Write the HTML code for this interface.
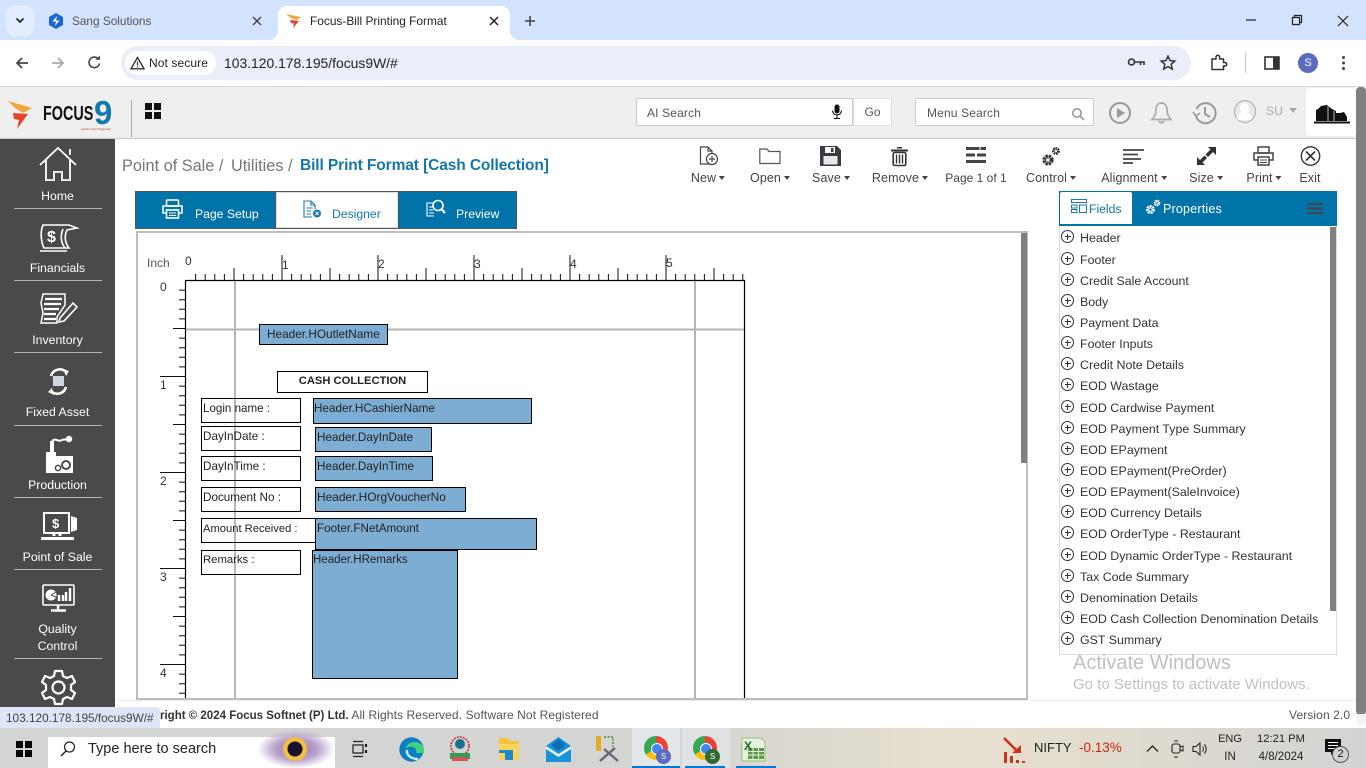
<!DOCTYPE html>
<html><head><meta charset="utf-8"><title>Focus-Bill Printing Format</title>
<style>
html,body{margin:0;padding:0;width:1366px;height:768px;overflow:hidden;background:#fff;font-family:"Liberation Sans",sans-serif;color:#444}
.a{position:absolute}
.t{position:absolute;white-space:nowrap;line-height:16px}
.c{transform:translateX(-50%)}
svg{position:absolute;overflow:visible}
.side{color:#fff;font-size:12.3px;text-align:center;left:0;width:115px}
.ln{position:absolute;left:14px;width:88px;height:1px;background:#b5b5b5}
.tb{color:#444;font-size:12.5px;letter-spacing:.1px}
.car{display:inline-block;width:0;height:0;border-left:3.5px solid transparent;border-right:3.5px solid transparent;border-top:4px solid #444;vertical-align:2px;margin-left:3px}
.bx{position:absolute;border:1.5px solid #000;box-sizing:border-box;font-size:11.7px;color:#222;line-height:15px;padding:2px 0 0 1px;white-space:nowrap;background:transparent}
.bl{background:#7eadd4;overflow:visible}
.fr{position:absolute;left:1080px;font-size:12.4px;color:#333;white-space:nowrap;line-height:16px}
.pl{position:absolute;left:1061px;width:13px;height:13px;border:1px solid #333;border-radius:50%;box-sizing:border-box}
.pl:before{content:"";position:absolute;left:2.5px;right:2.5px;top:5px;height:1px;background:#333}
.pl:after{content:"";position:absolute;top:2.5px;bottom:2.5px;left:5px;width:1px;background:#333}
.rl{position:absolute;font-size:12px;color:#333;line-height:14px}
</style></head><body>

<!-- Chrome tab strip -->
<div class="a" style="left:0;top:0;width:1366px;height:40px;background:#d3e3fd"></div>
<div class="a" style="left:6px;top:6px;width:28px;height:30px;background:#e4edfd;border-radius:9px"></div>
<svg style="left:15px;top:17px" width="10" height="7"><path d="M1.5 1.5L5 5L8.5 1.5" fill="none" stroke="#222" stroke-width="1.7"/></svg>
<svg style="left:48px;top:13px" width="16" height="16" viewBox="0 0 16 16"><path d="M8 0L15 4V12L8 16L1 12V4Z" fill="#1a66d6"/><path d="M9 3L4.5 8.5H8L7 13L11.5 7.5H8Z" fill="#fff"/></svg>
<div class="t" style="left:72px;top:13px;font-size:11.8px;color:#555">Sang Solutions</div>
<svg style="left:252px;top:16px" width="10" height="10"><path d="M1 1L9 9M9 1L1 9" stroke="#444" stroke-width="1.4"/></svg>
<div class="a" style="left:278px;top:6px;width:232px;height:34px;background:#fff;border-radius:9px 9px 0 0"></div>
<div class="a" style="left:268px;top:30px;width:10px;height:10px;background:radial-gradient(circle at 0 0,#d3e3fd 10px,#fff 10.5px)"></div>
<div class="a" style="left:510px;top:30px;width:10px;height:10px;background:radial-gradient(circle at 100% 0,#d3e3fd 10px,#fff 10.5px)"></div>
<svg style="left:286px;top:13px" width="16" height="16" viewBox="0 0 16 16"><path d="M0 1L15 4L11 7L5 5Z" fill="#f3a53a"/><path d="M4 7L13 8L7 15L8 10.5L5 10Z" fill="#e2452a"/></svg>
<div class="t" style="left:310px;top:13px;font-size:11.9px;color:#222">Focus-Bill Printing Format</div>
<svg style="left:489px;top:16px" width="10" height="10"><path d="M1 1L9 9M9 1L1 9" stroke="#222" stroke-width="1.5"/></svg>
<svg style="left:524px;top:15px" width="12" height="12"><path d="M6 1V11M1 6H11" stroke="#444" stroke-width="1.6"/></svg>
<svg style="left:1245px;top:19px" width="12" height="2"><path d="M1 1H11" stroke="#222" stroke-width="1.2"/></svg>
<svg style="left:1291px;top:14px" width="12" height="12"><path d="M1.5 3.5H8.5V10.5H1.5ZM3.5 3.5V1.5H10.5V8.5H8.5" fill="none" stroke="#222" stroke-width="1.2"/></svg>
<svg style="left:1337px;top:15px" width="12" height="12"><path d="M1 1L11 11M11 1L1 11" stroke="#222" stroke-width="1.2"/></svg>

<!-- Chrome toolbar -->
<div class="a" style="left:0;top:40px;width:1366px;height:46px;background:#fff;border-radius:12px 12px 0 0"></div>
<div class="a" style="left:0;top:86px;width:1366px;height:1px;background:#d8d8d8"></div>
<svg style="left:15px;top:56px" width="14" height="14"><path d="M13 7H2M7 2L2 7L7 12" fill="none" stroke="#444" stroke-width="1.7"/></svg>
<svg style="left:51px;top:56px" width="14" height="14"><path d="M1 7H12M7 2L12 7L7 12" fill="none" stroke="#aaa" stroke-width="1.7"/></svg>
<svg style="left:87px;top:55px" width="15" height="15" viewBox="0 0 15 15"><path d="M12.5 8.5A5.3 5.3 0 1 1 11 3.5" fill="none" stroke="#444" stroke-width="1.6"/><path d="M8.5 4.8H13V0.5Z" fill="#444"/></svg>
<div class="a" style="left:121px;top:46px;width:1070px;height:34px;background:#e9eef8;border-radius:17px"></div>
<div class="a" style="left:125px;top:51px;width:91px;height:24px;background:#fff;border-radius:12px"></div>
<svg style="left:130px;top:56px" width="15" height="14"><path d="M7.5 1.5L14 12.8H1Z" fill="none" stroke="#333" stroke-width="1.4"/><path d="M7.5 5.5V9.3M7.5 10.2V11.5" stroke="#333" stroke-width="1.2"/></svg>
<div class="t" style="left:149px;top:55px;font-size:12px;color:#222;letter-spacing:.1px">Not secure</div>
<div class="t" style="left:224px;top:55px;font-size:13.9px;color:#222">103.120.178.195/focus9W/#</div>
<svg style="left:1127px;top:56px" width="18" height="13" viewBox="0 0 18 13"><circle cx="4.5" cy="6" r="3" fill="none" stroke="#333" stroke-width="1.6"/><path d="M7.5 6H17V9M13.5 6V9" fill="none" stroke="#333" stroke-width="1.6"/></svg>
<svg style="left:1160px;top:55px" width="16" height="15" viewBox="0 0 16 15"><path d="M8 1.2L10 5.6L14.8 6.1L11.2 9.3L12.2 14L8 11.6L3.8 14L4.8 9.3L1.2 6.1L6 5.6Z" fill="none" stroke="#333" stroke-width="1.5"/></svg>
<svg style="left:1210px;top:54px" width="17" height="17" viewBox="0 0 17 17"><path d="M2 5H6V3A1.8 1.8 0 0 1 9.6 3V5H13.5V8.5H15.3A1.8 1.8 0 0 1 15.3 12H13.5V15.5H2Z" fill="none" stroke="#333" stroke-width="1.5"/></svg>
<div class="a" style="left:1245px;top:53px;width:1px;height:20px;background:#c8c8c8"></div>
<svg style="left:1264px;top:56px" width="16" height="14"><rect x="1" y="1" width="14" height="12" fill="none" stroke="#333" stroke-width="1.6"/><rect x="9" y="1" width="6" height="12" fill="#333"/></svg>
<div class="a" style="left:1298px;top:53px;width:20px;height:20px;background:#5c6bc0;border-radius:50%;color:#fff;font-size:11px;line-height:20px;text-align:center">S</div>
<div class="a" style="left:1342px;top:56px;width:3px;height:3px;background:#444;border-radius:50%;box-shadow:0 5.5px 0 #444,0 11px 0 #444"></div>

<!-- App header -->
<div class="a" style="left:0;top:87px;width:1356px;height:51px;background:#efefef"></div>
<div class="a" style="left:0;top:138px;width:1356px;height:1px;background:#c8c8c8"></div>
<svg style="left:8px;top:100px" width="26" height="30" viewBox="0 0 26 30"><path d="M0 1L24 8L15 13L7 8Z" fill="#f3a53a"/><path d="M5 13L20 14L9 29L11 20L6 19Z" fill="#e2452a"/></svg>
<div class="t" style="left:43px;top:104px;font-size:20px;font-weight:bold;color:#111;transform:scaleX(.72);transform-origin:left;line-height:20px">FOCUS</div>
<div class="t" style="left:94px;top:98px;font-size:33px;font-weight:bold;color:#1477ad;line-height:30px">9</div>
<div class="t" style="left:81px;top:127px;font-size:3px;line-height:4px;color:#c33">powered by Pragmatic</div>
<div class="a" style="left:131px;top:100px;width:1px;height:37px;background:#aaa"></div>
<div class="a" style="left:145px;top:103px;width:7px;height:7px;background:#111;box-shadow:9px 0 0 #111,0 9px 0 #111,9px 9px 0 #111"></div>

<div class="a" style="left:636px;top:98px;width:217px;height:28px;background:#fff;border:1px solid #ccc;box-sizing:border-box;border-radius:2px"></div>
<div class="t" style="left:647px;top:105px;font-size:12px;color:#555;letter-spacing:.15px">AI Search</div>
<svg style="left:831px;top:104px" width="12" height="16" viewBox="0 0 12 16"><rect x="3.5" y="0.5" width="5" height="9" rx="2.5" fill="#111"/><path d="M1.5 6.5A4.5 4.5 0 0 0 10.5 6.5M6 11V14M3 14.5H9" fill="none" stroke="#111" stroke-width="1.1"/></svg>
<div class="a" style="left:853px;top:98px;width:39px;height:28px;background:#fff;border:1px solid #ddd;box-sizing:border-box;font-size:12px;color:#555;text-align:center;line-height:27px">Go</div>
<div class="a" style="left:915px;top:98px;width:179px;height:28px;background:#fff;border:1px solid #ccc;box-sizing:border-box;border-radius:2px"></div>
<div class="t" style="left:927px;top:105px;font-size:12px;color:#555;letter-spacing:.15px">Menu Search</div>
<svg style="left:1071px;top:107px" width="14" height="14"><circle cx="6" cy="6" r="4.2" fill="none" stroke="#999" stroke-width="1.6"/><path d="M9 9L13 13" stroke="#999" stroke-width="1.8"/></svg>
<svg style="left:1108px;top:101px" width="24" height="24"><circle cx="12" cy="12" r="10" fill="none" stroke="#999" stroke-width="2"/><path d="M9 7L17 12L9 17Z" fill="#999"/></svg>
<svg style="left:1150px;top:100px" width="23" height="25" viewBox="0 0 23 25"><path d="M11.5 3C7 3 6 7 6 10C6 15 4 17 2 19.5H21C19 17 17 15 17 10C17 7 16 3 11.5 3ZM9 21A2.7 2.7 0 0 0 14 21" fill="none" stroke="#aaa" stroke-width="1.7"/></svg>
<svg style="left:1192px;top:101px" width="24" height="24" viewBox="0 0 24 24"><path d="M4.5 8A10 10 0 1 1 4 15" fill="none" stroke="#999" stroke-width="2"/><path d="M1 11L4 15L8 12" fill="none" stroke="#999" stroke-width="1.6"/><path d="M13 6V13L18 16" fill="none" stroke="#999" stroke-width="2"/></svg>
<div class="a" style="left:1234px;top:100px;width:20px;height:21px;background:#e8e8e8;border:1px solid #aaa;border-radius:50%"></div>
<div class="a" style="left:1240px;top:103px;width:9px;height:11px;background:#fff;border-radius:50%"></div>
<div class="a" style="left:1237px;top:113px;width:15px;height:7px;background:#fff;border-radius:8px 8px 4px 4px"></div>
<div class="t" style="left:1266px;top:103px;font-size:12px;color:#aaa;letter-spacing:.2px">SU</div>
<div class="a" style="left:1289px;top:108px;width:0;height:0;border-left:4px solid transparent;border-right:4px solid transparent;border-top:5px solid #aaa"></div>
<div class="a" style="left:1306px;top:88px;width:50px;height:48px;background:#fff;border-radius:4px"></div>
<svg style="left:1314px;top:100px" width="36" height="26" viewBox="0 0 36 26"><path d="M2 10L4 9L7 6L13 5L18 9L22 11L22 13L26 13L30 12L33 17L33 21H2Z" fill="#111"/><rect x="0" y="21.5" width="36" height="2" fill="#111"/><path d="M14 6V21M20 11V21" stroke="#fff" stroke-width=".7"/></svg>

<!-- Sidebar -->
<div class="a" style="left:0;top:139px;width:115px;height:589px;background:#4a4a4a"></div>
<svg style="left:39px;top:147px" width="38" height="36" viewBox="0 0 38 36"><path d="M1 18L19 1L37 18M31 8V2M7 13V33H15V25H23V33H31V13" fill="none" stroke="#fff" stroke-width="1.8"/></svg>
<div class="t side" style="top:188px">Home</div><div class="ln" style="top:208px"></div>
<svg style="left:39px;top:222px" width="38" height="33" viewBox="0 0 38 33"><path d="M4 3H30L38 6L28 8C25 14 26 21 30 26H5C2 20 1 10 4 3Z" fill="none" stroke="#fff" stroke-width="1.6"/><path d="M24 7C21 14 22 21 26 26M1 29H28" fill="none" stroke="#fff" stroke-width="1.6"/><text x="8" y="20" font-size="16" font-weight="bold" fill="#fff" font-family="Liberation Sans">$</text></svg>
<div class="t side" style="top:260px">Financials</div><div class="ln" style="top:280px"></div>
<svg style="left:40px;top:293px" width="38" height="32" viewBox="0 0 38 32"><path d="M3 1H25V12L17 24V30H1L3 20L1 10Z" fill="none" stroke="#fff" stroke-width="1.5"/><path d="M5 6H22M4 11H21M4 16H19M4 21H16M4 26H16" stroke="#fff" stroke-width="2.2"/><path d="M20 25L33 10L37 14L24 28L19 29Z" fill="none" stroke="#fff" stroke-width="1.6"/></svg>
<div class="t side" style="top:332px">Inventory</div><div class="ln" style="top:352px"></div>
<svg style="left:47px;top:367px" width="23" height="29" viewBox="0 0 23 29"><path d="M4 9A9 9 0 0 1 19 5M19 20A9 9 0 0 1 5 25" fill="none" stroke="#fff" stroke-width="2.6"/><path d="M16 2L22 4L19 9ZM7 28L1 25L5 21Z" fill="#fff"/><rect x="6" y="9" width="11" height="10" fill="#cfd6e4"/></svg>
<div class="t side" style="top:404px">Fixed Asset</div><div class="ln" style="top:425px"></div>
<svg style="left:43px;top:436px" width="32" height="37" viewBox="0 0 32 37"><path d="M3 37V16H7V5H11V16H13V20H30V37Z" fill="#fff"/><path d="M9 5C13 1 15 7 19 4C21 3 23 4 27 3" fill="none" stroke="#fff" stroke-width="2"/><circle cx="26" cy="3" r="3.2" fill="#fff"/><circle cx="23" cy="29" r="4" fill="none" stroke="#4a4a4a" stroke-width="2"/><circle cx="15" cy="32" r="2.6" fill="none" stroke="#4a4a4a" stroke-width="1.5"/></svg>
<div class="t side" style="top:477px">Production</div><div class="ln" style="top:497px"></div>
<svg style="left:40px;top:512px" width="38" height="28" viewBox="0 0 38 28"><rect x="4" y="1" width="25" height="20" fill="none" stroke="#fff" stroke-width="2"/><path d="M31 4L37 6V18L31 20Z" fill="#fff"/><path d="M14 21V24M20 21V24M1 26.5H34" stroke="#fff" stroke-width="3"/><text x="12" y="16" font-size="13" font-weight="bold" fill="#fff" font-family="Liberation Sans">$</text></svg>
<div class="t side" style="top:549px">Point of Sale</div><div class="ln" style="top:569px"></div>
<svg style="left:42px;top:584px" width="33" height="29" viewBox="0 0 33 29"><rect x="1" y="1" width="31" height="20" rx="1" fill="none" stroke="#fff" stroke-width="1.6"/><circle cx="9" cy="11" r="5.5" fill="#fff"/><path d="M9 11L14 8M9 11L14 13" stroke="#4a4a4a"/><path d="M17 11V17M21 11V17M24 8V17M28 4V17" stroke="#fff" stroke-width="2.4"/><path d="M16 21V25M9 26.5H24" stroke="#fff" stroke-width="2.4"/></svg>
<div class="t side" style="top:621px">Quality</div><div class="t side" style="top:638px">Control</div><div class="ln" style="top:658px"></div>
<svg style="left:40px;top:669px" width="37" height="37" viewBox="0 0 37 37"><path d="M15 2H22L23 7L27 9L32 7L35 13L31 16V21L35 24L32 30L27 28L23 30L22 35H15L14 30L10 28L5 30L2 24L6 21V16L2 13L5 7L10 9L14 7Z" fill="none" stroke="#fff" stroke-width="2.2" stroke-linejoin="round"/><circle cx="18.5" cy="18.5" r="6" fill="none" stroke="#fff" stroke-width="2.2"/></svg>

<!-- Breadcrumb -->
<div class="t" style="left:122px;top:156px;font-size:16.3px;line-height:20px;color:#777">Point of Sale /</div>
<div class="t" style="left:231px;top:156px;font-size:16.3px;line-height:20px;color:#777">Utilities /</div>
<div class="t" style="left:300px;top:156px;font-size:15.5px;line-height:20px;color:#1477a8;font-weight:bold;letter-spacing:-.1px">Bill Print Format [Cash Collection]</div>

<!-- Toolbar icons -->
<svg style="left:699px;top:146px" width="21" height="20" viewBox="0 0 21 20"><path d="M10 18H1.5V1H9L13 5V8M9 1V5H13" fill="none" stroke="#444" stroke-width="1.2"/><circle cx="13" cy="13" r="5.5" fill="none" stroke="#444" stroke-width="1.2"/><path d="M13 10V16M10 13H16" stroke="#444" stroke-width="1.2"/></svg>
<svg style="left:759px;top:148px" width="22" height="17" viewBox="0 0 22 17"><path d="M.8 15.5V1H8L10 3.5H21V15.5Z" fill="none" stroke="#555" stroke-width="1.2"/></svg>
<svg style="left:820px;top:146px" width="21" height="20" viewBox="0 0 21 20"><path d="M0 0H17L21 4V20H0Z" fill="#3a3a44"/><rect x="5" y="1" width="10" height="6" fill="#fff"/><rect x="11" y="2" width="2.5" height="4" fill="#3a3a44"/><rect x="3.5" y="10" width="14" height="8.5" fill="#e8e8e8"/></svg>
<svg style="left:891px;top:146px" width="17" height="20" viewBox="0 0 17 20"><path d="M6 2.5V1H11V2.5M0 3.5H17V5.5H0Z" fill="#333"/><rect x="2.2" y="6.5" width="12.6" height="13" rx="1.5" fill="none" stroke="#333" stroke-width="1.6"/><path d="M5.5 8.5V17.5M8.5 8.5V17.5M11.5 8.5V17.5" stroke="#333" stroke-width="1.4"/></svg>
<svg style="left:966px;top:147px" width="20" height="16" viewBox="0 0 20 16"><path d="M0 1.5H20M0 8H9M11 8H20M0 14.5H20" stroke="#444" stroke-width="3"/><path d="M14 0V3" stroke="#fff"/></svg>
<svg style="left:1041px;top:146px" width="20" height="21" viewBox="0 0 20 21"><circle cx="7" cy="14" r="3.6" fill="none" stroke="#333" stroke-width="4" stroke-dasharray="2.2 .7"/><circle cx="15" cy="5" r="2.5" fill="none" stroke="#333" stroke-width="3" stroke-dasharray="1.6 .6"/></svg>
<svg style="left:1123px;top:149px" width="21" height="15" viewBox="0 0 21 15"><path d="M0 1H21M0 5.5H15M0 10H18M0 14H10" stroke="#444" stroke-width="1.8"/></svg>
<svg style="left:1197px;top:146px" width="19" height="20" viewBox="0 0 19 20"><path d="M11 1H19V9L16 6L11 11L8.5 8.5L13.5 3.5ZM8 19H0V11L3 14L7.5 9.5L10 12L5.5 16.5Z" fill="#333"/></svg>
<svg style="left:1253px;top:146px" width="21" height="20" viewBox="0 0 21 20"><rect x="5" y="1" width="11" height="6" fill="none" stroke="#444" stroke-width="1.5"/><path d="M5 14H1V7H20V14H16" fill="none" stroke="#444" stroke-width="1.5"/><rect x="5" y="11" width="11" height="8" fill="none" stroke="#444" stroke-width="1.5"/><path d="M7 14H14M7 16.5H14" stroke="#444"/></svg>
<svg style="left:1300px;top:146px" width="21" height="20" viewBox="0 0 21 20"><circle cx="10.5" cy="10" r="9.2" fill="none" stroke="#333" stroke-width="1.4"/><path d="M6 5.5L15 14.5M15 5.5L6 14.5" stroke="#333" stroke-width="1.6"/></svg>
<div class="t tb c" style="left:708px;top:170px">New<span class="car"></span></div>
<div class="t tb c" style="left:770px;top:170px">Open<span class="car"></span></div>
<div class="t tb c" style="left:831px;top:170px">Save<span class="car"></span></div>
<div class="t tb c" style="left:900px;top:170px">Remove<span class="car"></span></div>
<div class="t tb c" style="left:976px;top:170px;font-size:12px;letter-spacing:0">Page 1 of 1</div>
<div class="t tb c" style="left:1051px;top:170px">Control<span class="car"></span></div>
<div class="t tb c" style="left:1134px;top:170px">Alignment<span class="car"></span></div>
<div class="t tb c" style="left:1206px;top:170px">Size<span class="car"></span></div>
<div class="t tb c" style="left:1264px;top:170px">Print<span class="car"></span></div>
<div class="t tb c" style="left:1310px;top:170px">Exit</div>

<!-- Designer tabs -->
<div class="a" style="left:135px;top:191px;width:382px;height:38px;background:#0073a9;border:1px solid #555;box-sizing:border-box"></div>
<div class="a" style="left:275px;top:191px;width:124px;height:38px;background:#fff;border:1px solid #555;border-top-color:#555;box-sizing:border-box;box-shadow:inset 0 0 0 1px #ddd"></div>
<svg style="left:162px;top:199px" width="21" height="20" viewBox="0 0 21 20"><rect x="4.5" y="1" width="12" height="6" rx="1" fill="none" stroke="#fff" stroke-width="1.6"/><path d="M4 14H1V7H20V14H17" fill="none" stroke="#fff" stroke-width="1.6"/><rect x="4.5" y="11" width="12" height="8" fill="none" stroke="#fff" stroke-width="1.6"/><path d="M7 14H14M7 16.5H14" stroke="#fff"/></svg>
<div class="t" style="left:195px;top:206px;font-size:12.2px;color:#fff">Page Setup</div>
<svg style="left:303px;top:200px" width="19" height="18" viewBox="0 0 19 18"><path d="M9 17H1V1H8L12 5V9M8 1V5H12M3.5 8H9.5M3.5 11H8M3.5 14H8" fill="none" stroke="#1d78ad" stroke-width="1.1"/><circle cx="14" cy="13.5" r="4" fill="#1d78ad"/><path d="M12.5 12L15.5 15M15.5 12L12.5 15" stroke="#fff"/></svg>
<div class="t" style="left:332px;top:206px;font-size:12.2px;color:#1477a8">Designer</div>
<svg style="left:426px;top:199px" width="20" height="19" viewBox="0 0 20 19"><path d="M8 17H1V4H9V6M3 8H7M3 11H7M3 14H8" fill="none" stroke="#fff" stroke-width="1.1"/><circle cx="12" cy="6.5" r="5" fill="#0073a9" stroke="#fff" stroke-width="1.6"/><path d="M15.5 10L19 14" stroke="#fff" stroke-width="2.2"/></svg>
<div class="t" style="left:456px;top:206px;font-size:12.2px;color:#fff">Preview</div>

<!-- Canvas -->
<div class="a" style="left:136px;top:231px;width:892px;height:469px;border:2px solid #bdbdbd;box-sizing:border-box;background:#fff"></div>
<div class="a" style="left:1021px;top:233px;width:6px;height:230px;background:#808080"></div>
<svg style="left:0;top:0" width="1366" height="768">
<defs>
<pattern id="hr" x="185.5" y="255" width="96" height="26" patternUnits="userSpaceOnUse">
<path d="M.5 0V26M48.5 13V26M10.1 19V26M19.7 19V26M29.3 19V26M38.9 19V26M58.1 19V26M67.7 19V26M77.3 19V26M86.9 19V26" stroke="#111" stroke-width="1"/>
</pattern>
<pattern id="vr" x="160" y="280" width="26" height="96" patternUnits="userSpaceOnUse">
<path d="M0 .5H26M13 48.5H26M19 10.1H26M19 19.7H26M19 29.3H26M19 38.9H26M19 58.1H26M19 67.7H26M19 77.3H26M19 86.9H26" stroke="#111" stroke-width="1"/>
</pattern>
</defs>
<rect x="187" y="255" width="556.5" height="25" fill="url(#hr)"/>
<rect x="160" y="281" width="25" height="416" fill="url(#vr)"/>
<path d="M185.5 280.5H744.5V698M185.5 280V698" fill="none" stroke="#000" stroke-width="1.2"/>
<path d="M235 281V698M695 281V698M186 329.5H744" stroke="#b5b5b5" stroke-width="2"/>
</svg>
<div class="rl" style="left:147px;top:256px;color:#555">Inch</div>
<div class="rl" style="left:185px;top:254px">0</div>
<div class="rl" style="left:282px;top:258px">1</div>
<div class="rl" style="left:378px;top:257px">2</div>
<div class="rl" style="left:474px;top:257px">3</div>
<div class="rl" style="left:570px;top:257px">4</div>
<div class="rl" style="left:666px;top:256px">5</div>
<div class="rl" style="left:160px;top:280px">0</div>
<div class="rl" style="left:160px;top:378px">1</div>
<div class="rl" style="left:160px;top:474px">2</div>
<div class="rl" style="left:160px;top:570px">3</div>
<div class="rl" style="left:160px;top:666px">4</div>

<div class="bx bl" style="left:259px;top:324px;width:129px;height:21px;padding:0 0 0 7px;line-height:19px;font-size:11.8px">Header.HOutletName</div>
<div class="bx" style="left:277px;top:371px;width:151px;height:22px;background:#fff;text-align:center;font-weight:bold;line-height:18px;font-size:11.2px;padding:0">CASH COLLECTION</div>
<div class="bx" style="left:201px;top:398px;width:100px;height:25px;font-size:11.6px">Login name :</div>
<div class="bx bl" style="left:313px;top:398px;width:219px;height:26px;padding-left:0">Header.HCashierName</div>
<div class="bx" style="left:201px;top:426px;width:100px;height:25px">DayInDate :</div>
<div class="bx bl" style="left:315px;top:427px;width:117px;height:25px">Header.DayInDate</div>
<div class="bx" style="left:201px;top:456px;width:100px;height:25px">DayInTime :</div>
<div class="bx bl" style="left:315px;top:456px;width:118px;height:25px">Header.DayInTime</div>
<div class="bx" style="left:201px;top:487px;width:100px;height:25px">Document No :</div>
<div class="bx bl" style="left:315px;top:487px;width:151px;height:25px;font-size:11.9px">Header.HOrgVoucherNo</div>
<div class="bx" style="left:201px;top:518px;width:115px;height:25px;font-size:11.2px;padding-top:3px">Amount Received :</div>
<div class="bx bl" style="left:315px;top:518px;width:222px;height:32px">Footer.FNetAmount</div>
<div class="bx" style="left:201px;top:550px;width:100px;height:25px;font-size:11.3px">Remarks :</div>
<div class="bx bl" style="left:312px;top:550px;width:146px;height:129px;padding-left:0;font-size:11.5px">Header.HRemarks</div>

<!-- Right fields panel -->
<div class="a" style="left:1059px;top:191px;width:278px;height:464px;border:1px solid #ddd;border-top:0;box-sizing:border-box;background:#fff"></div>
<div class="a" style="left:1059px;top:191px;width:278px;height:35px;background:#0073a9"></div>
<div class="a" style="left:1060px;top:192px;width:72px;height:32px;background:#fff;border-radius:2px 2px 0 0"></div>
<svg style="left:1071px;top:199px" width="16" height="14"><path d="M.5 .5H15.5V3.5H.5ZM.5 6H6V9H.5ZM.5 10.5H6V13.5H.5ZM8.5 6H15.5V13.5H8.5Z" fill="none" stroke="#1d78ad"/></svg>
<div class="t" style="left:1089px;top:201px;font-size:12.2px;color:#1477a8">Fields</div>
<svg style="left:1145px;top:199px" width="16" height="16" viewBox="0 0 16 16"><circle cx="5.5" cy="10.5" r="2.8" fill="none" stroke="#fff" stroke-width="3.4" stroke-dasharray="1.8 .6"/><circle cx="12" cy="4" r="2" fill="none" stroke="#fff" stroke-width="2.6" stroke-dasharray="1.4 .5"/></svg>
<div class="t" style="left:1163px;top:201px;font-size:12.5px;color:#fff;letter-spacing:.2px">Properties</div>
<div class="a" style="left:1307px;top:203px;width:16px;height:2px;background:#444;box-shadow:0 4.5px 0 #444,0 9px 0 #444"></div>
<div class="a" style="left:1330px;top:227px;width:6px;height:384px;background:#808080"></div>

<div class="pl" style="top:230px"></div><div class="fr" style="top:230px">Header</div>
<div class="pl" style="top:252px"></div><div class="fr" style="top:252px">Footer</div>
<div class="pl" style="top:273px"></div><div class="fr" style="top:273px">Credit Sale Account</div>
<div class="pl" style="top:294px"></div><div class="fr" style="top:294px">Body</div>
<div class="pl" style="top:315px"></div><div class="fr" style="top:315px">Payment Data</div>
<div class="pl" style="top:336px"></div><div class="fr" style="top:336px">Footer Inputs</div>
<div class="pl" style="top:357px"></div><div class="fr" style="top:357px">Credit Note Details</div>
<div class="pl" style="top:378px"></div><div class="fr" style="top:378px">EOD Wastage</div>
<div class="pl" style="top:400px"></div><div class="fr" style="top:400px">EOD Cardwise Payment</div>
<div class="pl" style="top:421px"></div><div class="fr" style="top:421px">EOD Payment Type Summary</div>
<div class="pl" style="top:442px"></div><div class="fr" style="top:442px">EOD EPayment</div>
<div class="pl" style="top:463px"></div><div class="fr" style="top:463px">EOD EPayment(PreOrder)</div>
<div class="pl" style="top:484px"></div><div class="fr" style="top:484px">EOD EPayment(SaleInvoice)</div>
<div class="pl" style="top:505px"></div><div class="fr" style="top:505px">EOD Currency Details</div>
<div class="pl" style="top:526px"></div><div class="fr" style="top:526px">EOD OrderType - Restaurant</div>
<div class="pl" style="top:548px"></div><div class="fr" style="top:548px">EOD Dynamic OrderType - Restaurant</div>
<div class="pl" style="top:569px"></div><div class="fr" style="top:569px">Tax Code Summary</div>
<div class="pl" style="top:590px"></div><div class="fr" style="top:590px">Denomination Details</div>
<div class="pl" style="top:611px"></div><div class="fr" style="top:611px">EOD Cash Collection Denomination Details</div>
<div class="pl" style="top:632px"></div><div class="fr" style="top:632px">GST Summary</div>

<div class="t" style="left:1073px;top:651px;font-size:20px;line-height:24px;color:#c0c0c0">Activate Windows</div>
<div class="t" style="left:1073px;top:677px;font-size:15px;color:#c0c0c0">Go to Settings to activate Windows.</div>

<!-- Page scrollbar -->
<div class="a" style="left:1356px;top:87px;width:10px;height:628px;background:#808080;border-radius:4px 4px 4px 4px"></div>
<div class="a" style="left:1356px;top:714px;width:10px;height:12px;background:#f4f4f4;border-radius:0 0 5px 5px"></div>

<!-- Footer -->
<div class="a" style="left:115px;top:700px;width:1241px;height:1px;background:#eee"></div>
<div class="t" style="left:115px;top:707px;width:1241px;font-size:12px;color:#555"><span style="position:absolute;left:45px;letter-spacing:.1px"><b style="color:#333;font-size:11.5px;letter-spacing:0">right © 2024 Focus Softnet (P) Ltd.</b> All Rights Reserved. Software Not Registered</span><span style="position:absolute;left:1174px;letter-spacing:.1px">Version 2.0</span></div>
<div class="a" style="left:0;top:707px;width:160px;height:21px;background:#dce6f7;border-radius:0 4px 0 0"></div>
<div class="t" style="left:6px;top:710px;font-size:11.8px;color:#444">103.120.178.195/focus9W/#</div>

<!-- Taskbar -->
<div class="a" style="left:0;top:728px;width:1366px;height:40px;background:linear-gradient(90deg,#d4d4d4 0%,#d4d4d2 50%,#e8e0cf 70%,#e2dccf 80%,#d3d3d2 100%)"></div>
<div class="a" style="left:16px;top:741px;width:7px;height:7px;background:#000;box-shadow:9px 0 0 #000,0 9px 0 #000,9px 9px 0 #000"></div>
<div class="a" style="left:48px;top:737px;width:287px;height:31px;background:#fff"></div>
<svg style="left:60px;top:741px" width="16" height="16"><circle cx="9.5" cy="6" r="5" fill="none" stroke="#222" stroke-width="1.2"/><path d="M6 10L1 15" stroke="#222" stroke-width="1.4"/></svg>
<div class="t" style="left:88px;top:741px;font-size:14.5px;color:#222">Type here to search</div>
<div class="a" style="left:258px;top:730px;width:76px;height:38px;background:radial-gradient(ellipse at 50% 50%,#8f6cb0 0,#b9a3cc 40%,#ffffff00 72%)"></div>
<div class="a" style="left:281px;top:737px;width:28px;height:24px;border-radius:50%;background:radial-gradient(circle,#1a1030 0 7px,#f3c041 8px 11px,#ffffff00 13px)"></div>
<svg style="left:351px;top:741px" width="18" height="16"><path d="M2 .5H12M2 15.5H12M2 4H12V12H2Z" fill="none" stroke="#222" stroke-width="1.2"/><path d="M15 3V6M15 9V12" stroke="#222" stroke-width="2.2"/></svg>
<svg style="left:399px;top:737px" width="25" height="25" viewBox="0 0 25 25"><circle cx="12.5" cy="12.5" r="12.2" fill="#0c7fc4"/><path d="M25 13C25 8 20 5 15 5C10 5 7 9 7 12C9 9 14 9 16 11C18 13 17 15 17 16H25Z" fill="#42d17f"/><path d="M8 13C7 18 12 22 19 22" stroke="#cfeaf8" stroke-width="2.4" fill="none"/></svg>
<svg style="left:448px;top:735px" width="24" height="27" viewBox="0 0 24 27"><circle cx="12" cy="11" r="9" fill="none" stroke="#c33" stroke-width="1.6" stroke-dasharray="2 1"/><circle cx="12" cy="9" r="5" fill="#1d6f8f"/><path d="M2 18H22V24H2Z" fill="#2e9e5b"/><path d="M4 22H20V26H4Z" fill="#d9534f"/></svg>
<svg style="left:498px;top:738px" width="22" height="22" viewBox="0 0 22 22"><path d="M1 0H10L12 3H21V22H1Z" fill="#f5c33b"/><rect x="1" y="6" width="20" height="16" fill="#f9d45c"/><rect x="7" y="12" width="8" height="10" fill="#1f87c9"/><rect x="1" y="12" width="6" height="3" fill="#1f87c9"/></svg>
<svg style="left:546px;top:737px" width="25" height="25" viewBox="0 0 25 25"><path d="M12.5 0L25 9V25H0V9Z" fill="#1892d8"/><path d="M0 9L12.5 17L25 9V12L12.5 20L0 12Z" fill="#e8f3fb"/><path d="M5 8L12.5 2L20 8L12.5 14Z" fill="#0a6fb3"/></svg>
<svg style="left:595px;top:735px" width="25" height="28" viewBox="0 0 25 28"><rect x="1" y="1" width="5" height="15" fill="#e4a92b"/><path d="M9 2H18V12" fill="none" stroke="#4d8a3a" stroke-width="1.5" stroke-dasharray="2 1.5"/><path d="M5 26L20 13M9 14L23 26" stroke="#667" stroke-width="2.4"/></svg>
<div class="a" style="left:632px;top:728px;width:48px;height:40px;background:#e4e7ea"></div>
<div class="a" style="left:632px;top:766px;width:48px;height:2px;background:#0078d7"></div>
<div class="a" style="left:682px;top:728px;width:48px;height:40px;background:#dfe1e3"></div>
<div class="a" style="left:685px;top:766px;width:40px;height:2px;background:#0078d7"></div>
<div class="a" style="left:736px;top:766px;width:40px;height:2px;background:#0078d7"></div>
<div class="a" style="left:644px;top:736px;width:24px;height:24px;border-radius:50%;background:conic-gradient(#ea4335 0 33%,#fbbc05 33% 66%,#34a853 66% 100%)"></div>
<div class="a" style="left:651px;top:743px;width:10px;height:10px;border-radius:50%;background:#4285f4;border:1.5px solid #fff"></div>
<div class="a" style="left:656px;top:749px;width:15px;height:15px;border-radius:50%;background:#5c6bc0;color:#fff;font-size:8px;line-height:15px;text-align:center">S</div>
<div class="a" style="left:693px;top:736px;width:24px;height:24px;border-radius:50%;background:conic-gradient(#ea4335 0 33%,#fbbc05 33% 66%,#34a853 66% 100%)"></div>
<div class="a" style="left:700px;top:743px;width:10px;height:10px;border-radius:50%;background:#4285f4;border:1.5px solid #fff"></div>
<div class="a" style="left:705px;top:749px;width:15px;height:15px;border-radius:50%;background:#2f6b2f;color:#fff;font-size:8px;line-height:15px;text-align:center">S</div>
<svg style="left:741px;top:737px" width="25" height="25" viewBox="0 0 25 25"><path d="M1 1H20L24 5V24H1Z" fill="#e6f3df" stroke="#8fc27a"/><rect x="7" y="11" width="16" height="11" fill="#5d9c45"/><path d="M7 14.5H23M7 18H23M12 11V22M17.5 11V22" stroke="#e6f3df"/><text x="3" y="13" font-size="12" font-weight="bold" fill="#1f6b2b" font-family="Liberation Sans">X</text></svg>

<svg style="left:1003px;top:737px" width="24" height="27" viewBox="0 0 24 27"><path d="M1 1L14 14" stroke="#c8351a" stroke-width="2.6"/><path d="M9 16H18V8Z" fill="#c8351a"/><path d="M1 15H4V26H1ZM7 19H10V26H7ZM13 23H16V26H13ZM19 24H22V26H19Z" fill="#c8351a"/></svg>
<div class="t" style="left:1034px;top:740px;font-size:13px;color:#222">NIFTY</div>
<div class="t" style="left:1079px;top:740px;font-size:13.5px;color:#c8260f">-0.13%</div>
<svg style="left:1146px;top:744px" width="13" height="9"><path d="M1 7.5L6.5 2L12 7.5" fill="none" stroke="#222" stroke-width="1.3"/></svg>
<svg style="left:1171px;top:739px" width="13" height="20"><rect x="1" y="5" width="8" height="9" rx="2" fill="none" stroke="#222" stroke-width="1.1"/><path d="M9 8L12 7V12L9 11M3 2H7M3 18H7" fill="none" stroke="#222"/></svg>
<svg style="left:1192px;top:741px" width="17" height="16"><path d="M1 5.5H4L8 2V14L4 10.5H1Z" fill="none" stroke="#222" stroke-width="1.1"/><path d="M10.5 5.5A4 4 0 0 1 10.5 10.5M12.5 3.5A7 7 0 0 1 12.5 12.5" fill="none" stroke="#222"/></svg>
<div class="t c" style="left:1230px;top:731px;font-size:11px;color:#222">ENG</div>
<div class="t c" style="left:1230px;top:749px;font-size:11.5px;color:#222">IN</div>
<div class="t c" style="left:1281px;top:731px;font-size:11.2px;color:#222">12:21 PM</div>
<div class="t c" style="left:1281px;top:749px;font-size:11.5px;color:#222">4/8/2024</div>
<svg style="left:1325px;top:739px" width="16" height="17"><path d="M0 0H16V13H9L6 16V13H0Z" fill="#111"/><path d="M3 3.5H13M3 6.5H13M3 9.5H10" stroke="#fff"/></svg>
<div class="a" style="left:1332px;top:746px;width:15px;height:15px;border:1px solid #555;border-radius:50%;background:#d3d3d2;font-size:11px;line-height:15px;text-align:center;color:#111">2</div>
</body></html>
